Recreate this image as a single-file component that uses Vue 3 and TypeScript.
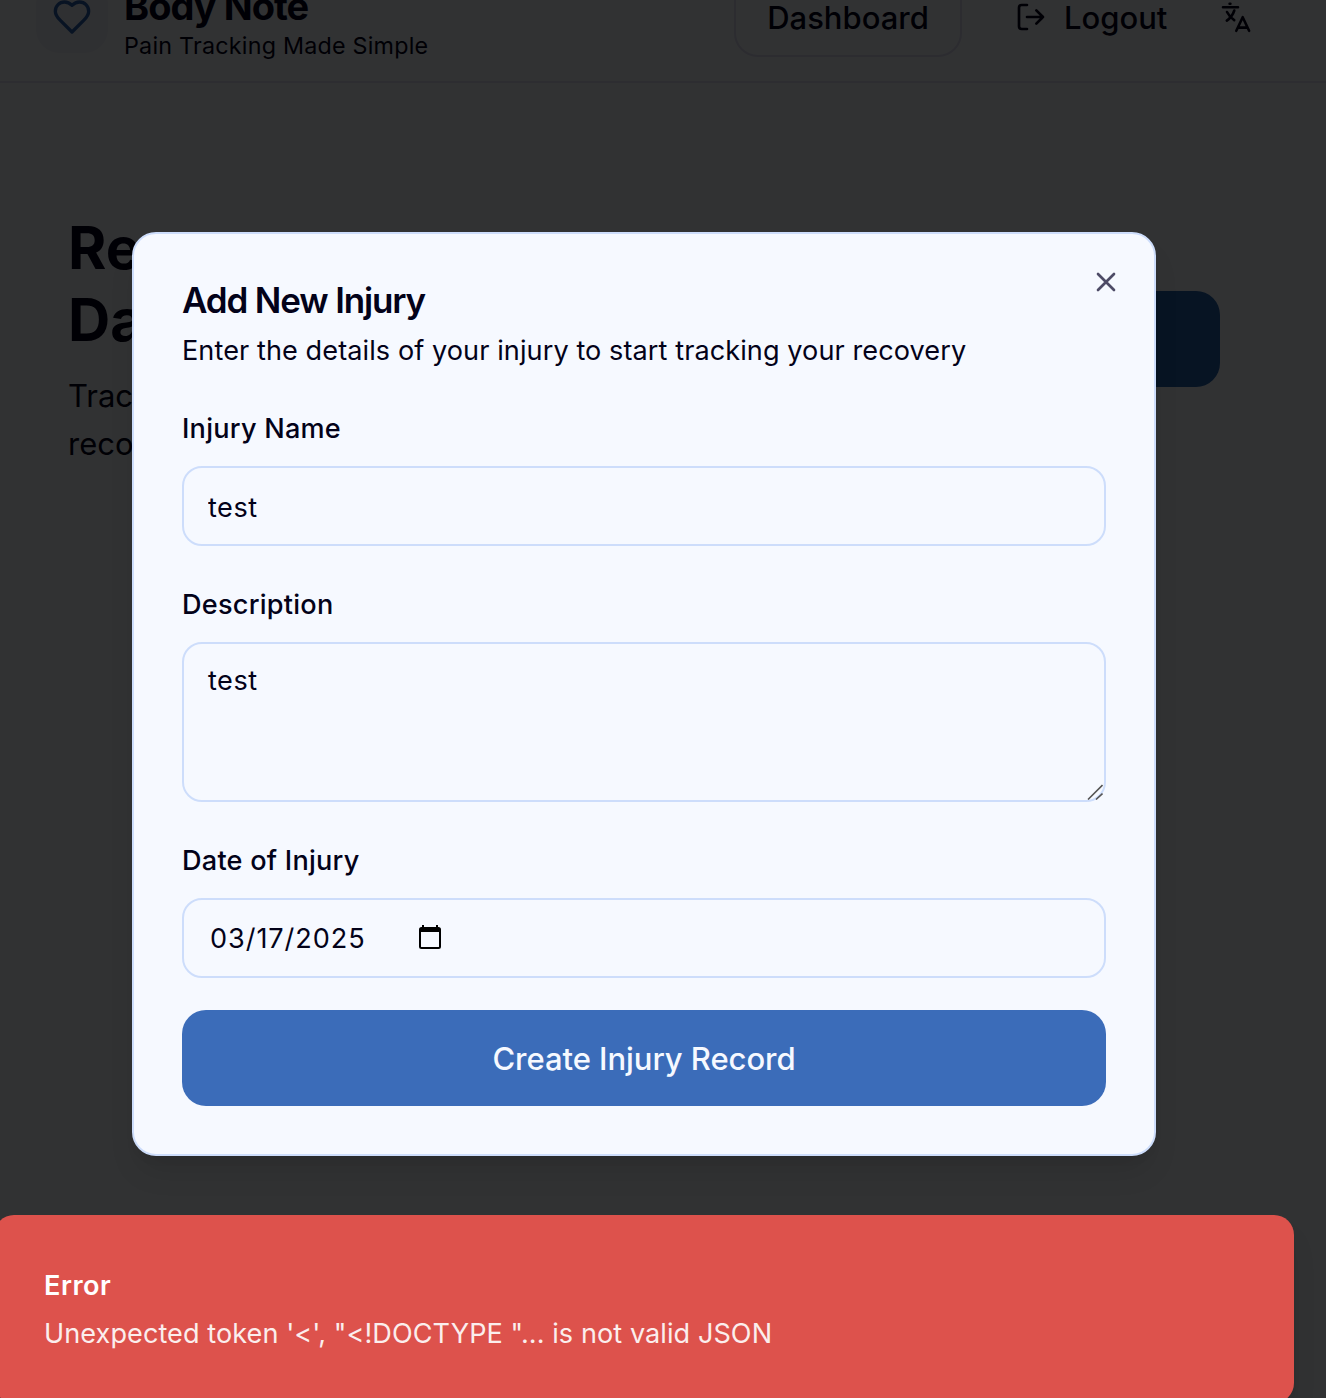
<script setup lang="ts">
import { ref } from 'vue'

const name = ref('test')
const description = ref('test')
const date = ref('03/17/2025')
</script>

<template>
  <div class="screen">
    <div class="page">
      <header class="header">
        <div class="brand">
          <div class="brand-icon">
            <svg width="40" height="40" viewBox="0 0 24 24" class="stroke">
              <path d="M19 14c1.49-1.46 3-3.21 3-5.5A5.5 5.5 0 0 0 16.5 3c-1.76 0-3 .5-4.5 2-1.5-1.5-2.74-2-4.5-2A5.5 5.5 0 0 0 2 8.500c0 2.300 1.500 4.050 3 5.500l7 7Z" />
            </svg>
          </div>
          <div class="brand-text">
            <span class="brand-name">Body Note</span>
            <span class="brand-tag">Pain Tracking Made Simple</span>
          </div>
        </div>
        <nav class="nav">
          <button class="nav-btn outlined"><span>Dashboard</span></button>
          <button class="nav-btn logout">
            <svg width="32" height="32" viewBox="0 0 24 24" class="stroke">
              <path d="M9 21H5a2 2 0 0 1-2-2V5a2 2 0 0 1 2-2h4M16 17l5-5-5-5M21 12H9" />
            </svg>
            <span>Logout</span>
          </button>
          <button class="nav-btn lang" aria-label="Language">
            <svg width="32" height="32" viewBox="0 0 32 32" class="stroke lang-icon">
              <path d="M9.600 2.700h.8M3 6.200h15M14.300 9.500C13 13.500 10.500 17 6.800 19.600M7 11c1.800 3.500 4.200 6.200 7.200 8.200M16.300 29.800l6.400-13.600 6.400 13.600M18.600 26.600h8.200" />
            </svg>
          </button>
        </nav>
      </header>
      <main class="hero">
        <div class="hero-text">
          <h1>Recovery Dashboard</h1>
          <p>Track your injuries and recovery progress</p>
        </div>
        <div class="hero-btn"></div>
      </main>
    </div>

    <div class="overlay">
      <section class="dialog" role="dialog">
        <button class="close" aria-label="Close">
          <svg width="32" height="32" viewBox="0 0 24 24" class="stroke"><path d="M18 6 6 18M6 6l12 12" /></svg>
        </button>
        <h2>Add New Injury</h2>
        <p class="sub">Enter the details of your injury to start tracking your recovery</p>
        <form class="form" @submit.prevent>
          <div class="field">
            <label>Injury Name</label>
            <input v-model="name" class="control" type="text" />
          </div>
          <div class="field">
            <label>Description</label>
            <div class="area">
              <textarea v-model="description" class="control"></textarea>
              <svg class="grip" width="16" height="16" viewBox="0 0 16 16"><path d="M1 15.500 15.500 1M9 15.500l6.500-6" /></svg>
            </div>
          </div>
          <div class="field">
            <label>Date of Injury</label>
            <div class="control date">
              <span>{{ date }}</span>
              <svg width="22" height="24" viewBox="0 0 22 24">
                <path d="M4 0v4M18 0v4" stroke="#000" stroke-width="2" />
                <rect x="1" y="3" width="20" height="20" rx="1.500" fill="none" stroke="#000" stroke-width="2" />
                <path d="M1 3h20v4H1z" />
              </svg>
            </div>
          </div>
          <button class="submit" type="submit">Create Injury Record</button>
        </form>
      </section>
    </div>

    <div class="toast" role="alert">
      <strong>Error</strong>
      <span>Unexpected token '&lt;', "&lt;!DOCTYPE "... is not valid JSON</span>
    </div>
  </div>
</template>

<style>
body {
  margin: 0;
  overflow: hidden;
}
</style>

<style scoped>
.screen {
  position: relative;
  width: 1326px;
  height: 1398px;
  overflow: hidden;
  background: #f6f9ff;
  color: #030219;
  font-family: Inter, "Liberation Sans", sans-serif;
  font-size: 27.1px;
}
.screen * {
  box-sizing: border-box;
}
button {
  border: 0;
  padding: 0;
  background: none;
  color: inherit;
  font: inherit;
}
h1,
h2,
p {
  margin: 0;
}
.stroke {
  fill: none;
  stroke: currentColor;
  stroke-width: 2;
  stroke-linecap: round;
  stroke-linejoin: round;
  flex: none;
}
.page {
  margin-top: -47px;
}
.header {
  display: flex;
  justify-content: space-between;
  align-items: center;
  height: 130px;
  padding: 0 58px 0 36px;
  border-bottom: 2px solid #dfdff5;
}
.brand {
  display: flex;
  align-items: center;
  gap: 16px;
}
.brand-icon {
  display: flex;
  align-items: center;
  justify-content: center;
  width: 72px;
  height: 72px;
  border-radius: 24px;
  background: #e9eef7;
  color: #2c60af;
}
.brand-text {
  display: flex;
  flex-direction: column;
  margin-top: 10px;
  white-space: nowrap;
}
.brand-name {
  font-size: 38px;
  line-height: 48px;
  font-weight: 700;
  letter-spacing: -1px;
}
.brand-tag {
  font-size: 23.3px;
  line-height: 32px;
  letter-spacing: 0.22px;
}
.nav {
  display: flex;
  align-items: center;
}
.nav-btn {
  display: flex;
  align-items: center;
  justify-content: center;
  height: 80px;
  font-size: 31px;
  font-weight: 500;
}
.outlined {
  width: 228px;
  border: 2px solid #d9daf0;
  border-radius: 24px;
}
.logout {
  gap: 17px;
  width: 152px;
  margin-left: 53px;
  justify-content: flex-start;
}
.lang {
  width: 64px;
  margin-left: 37px;
}
.lang-icon {
  stroke-width: 2.6;
}
.hero {
  display: flex;
  justify-content: space-between;
  align-items: center;
  padding: 129px 106px 0 68px;
}
.hero-text {
  width: 420px;
}
.hero h1 {
  font-size: 58.5px;
  line-height: 72px;
  font-weight: 700;
}
.hero p {
  margin-top: 16px;
  font-size: 31px;
  line-height: 48px;
}
.hero-btn {
  width: 300px;
  height: 96px;
  margin-top: -3px;
  border-radius: 24px;
  background: #2364af;
}
.overlay {
  position: absolute;
  inset: 0;
  padding: 232px 170px 0 132px;
  background: rgba(0, 0, 0, 0.8);
}
.dialog {
  position: relative;
  width: 1024px;
  height: 924px;
  padding: 48px;
  border: 2px solid #cdddfb;
  border-radius: 24px;
  background: #f6f9ff;
  box-shadow: 0 20px 30px -6px rgba(0, 0, 0, 0.1), 0 8px 12px -8px rgba(0, 0, 0, 0.1);
}
.close {
  position: absolute;
  top: 32px;
  right: 32px;
  width: 32px;
  height: 32px;
  color: #4d4b66;
}
.close svg {
  display: block;
}
h2 {
  font-size: 35px;
  line-height: 36px;
  font-weight: 600;
  letter-spacing: -1.15px;
}
.sub {
  margin-top: 13px;
  line-height: 40px;
  letter-spacing: 0.08px;
  white-space: nowrap;
}
.form {
  display: flex;
  flex-direction: column;
  margin-top: 44px;
}
.field {
  display: flex;
  flex-direction: column;
  gap: 23px;
  margin-bottom: 45px;
}
.field:nth-child(3) {
  margin-bottom: 32px;
}
label {
  line-height: 28px;
  font-weight: 500;
  letter-spacing: 0.24px;
}
.control {
  display: block;
  width: 100%;
  height: 80px;
  padding: 4px 24px 2px;
  border: 2px solid #cdddfb;
  border-radius: 20px;
  background: #f6f9ff;
  color: inherit;
  font: inherit;
  letter-spacing: 0.5px;
  outline: none;
}
.area {
  position: relative;
}
textarea.control {
  height: 160px;
  padding: 17px 24px 0;
  line-height: 40px;
  resize: none;
}
.grip {
  position: absolute;
  right: 3px;
  bottom: 2px;
  fill: none;
  stroke: #555;
  stroke-width: 1.6;
}
.date {
  display: flex;
  align-items: center;
  padding: 0 26px;
}
.date span {
  width: 209px;
  letter-spacing: 0.93px;
}
.date svg {
  margin-top: -2px;
}
.submit {
  height: 96px;
  border-radius: 24px;
  background: #3b6cb9;
  color: #f6f9ff;
  font-size: 31px;
  font-weight: 500;
  letter-spacing: -0.05px;
}
.toast {
  position: absolute;
  left: -6px;
  top: 1215px;
  display: flex;
  flex-direction: column;
  gap: 8px;
  width: 1300px;
  height: 188px;
  padding: 51px 50px 49px;
  border-radius: 20px;
  background: #dd524c;
  color: #fff;
  line-height: 40px;
  box-shadow: 0 20px 30px -6px rgba(0, 0, 0, 0.1), 0 8px 12px -8px rgba(0, 0, 0, 0.1);
}
.toast strong {
  font-weight: 600;
  letter-spacing: 0.5px;
}
.toast span {
  opacity: 0.9;
  letter-spacing: 0.06px;
}
</style>
